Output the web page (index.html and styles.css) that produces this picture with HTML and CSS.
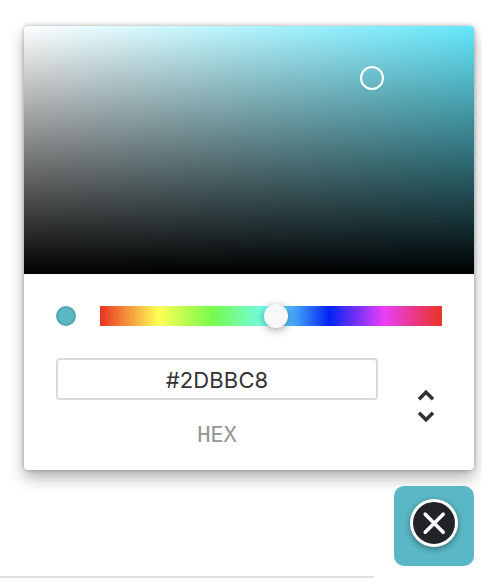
FILE: index.html
```html
<!DOCTYPE html>
<html lang="en">
<head>
<meta charset="utf-8">
<title>Color picker</title>
<link rel="stylesheet" href="styles.css">
</head>
<body>
<div class="picker">
  <div class="saturation"><span class="pointer"></span></div>
  <div class="body">
    <div class="controls">
      <span class="swatch"></span>
      <div class="hue"><span class="thumb"></span></div>
    </div>
    <div class="fields">
      <div class="field">
        <div class="value">#2DBBC8</div>
        <div class="label">HEX</div>
      </div>
      <svg class="toggle" width="20" height="36" viewBox="0 0 20 36">
        <path d="M3 11.3 10 4.3 17 11.3M3 24.7 10 31.7 17 24.7"/>
      </svg>
    </div>
  </div>
</div>
<div class="footer">
  <div class="rule"></div>
  <div class="trigger">
    <div class="close">
      <svg width="42" height="42" viewBox="0 0 42 42"><path d="M12.2 12.2 30.2 30.2M30.2 12.2 12.2 30.2"/></svg>
    </div>
  </div>
</div>
</body>
</html>
```
FILE: styles.css
```css
* { box-sizing: border-box; }
body {
  margin: 0;
  padding: 26px 8px 0 0;
  height: 580px;
  overflow: hidden;
  background: #fff;
  font-family: Inter, "Liberation Sans", sans-serif;
}
.picker {
  width: 450px;
  height: 444px;
  margin-left: 24px;
  border-radius: 4px;
  background: #fff;
  box-shadow: 0 0 4px rgba(0, 0, 0, .3), 0 8px 16px rgba(0, 0, 0, .3);
}
.saturation {
  position: relative;
  height: 248px;
  border-radius: 4px 4px 0 0;
  background:
    linear-gradient(to top, #000, rgba(0, 0, 0, 0)),
    linear-gradient(to right, #fff, rgba(255, 255, 255, 0)),
    #64e8fc;
}
.pointer {
  position: absolute;
  left: 336px;
  top: 40px;
  width: 24px;
  height: 24px;
  border: 2px solid #fff;
  border-radius: 50%;
}
.body { padding: 32px 32px 0; }
.controls {
  display: flex;
  align-items: center;
  gap: 24px;
}
.swatch {
  width: 20px;
  height: 20px;
  border-radius: 50%;
  background: #5ab7c6;
  box-shadow: inset 0 0 0 2px rgba(0, 0, 0, .1);
}
.hue {
  position: relative;
  flex: 1;
  height: 20px;
  background: linear-gradient(to right, #ea3323 0%, #ffff54 17%, #75fb4c 33%, #75fbfd 50%, #0023f5 67%, #ea3ff7 83%, #ea3323 100%);
}
.thumb {
  position: absolute;
  left: 164px;
  top: -2px;
  width: 24px;
  height: 24px;
  border-radius: 50%;
  background: #f8f8f8;
  box-shadow: 0 2px 8px rgba(0, 0, 0, .37);
}
.fields {
  display: flex;
  padding-top: 32px;
}
.field {
  width: 322px;
  text-align: center;
}
.value {
  height: 42px;
  border: 2px solid #dadada;
  border-radius: 4px;
  color: #333;
  font-size: 22px;
  line-height: 40px;
  letter-spacing: .15px;
}
.label {
  margin-top: 23px;
  color: #969696;
  font: 22px/24px "DejaVu Sans Mono", monospace;
}
.toggle {
  margin: 30px 0 0 38px;
  fill: none;
  stroke: #333;
  stroke-width: 3.6;
}
.footer {
  display: flex;
  align-items: flex-start;
  gap: 20px;
  margin-top: 16px;
}
.rule {
  width: 374px;
  height: 2px;
  margin-top: 90px;
  background: #e0e0e0;
}
.trigger {
  display: flex;
  justify-content: center;
  width: 80px;
  height: 80px;
  padding-top: 13px;
  border-radius: 10px;
  background: #5ab7c6;
}
.close {
  width: 48px;
  height: 48px;
  border: 3px solid #fff;
  border-radius: 50%;
  background: #212329;
  box-shadow: 0 2px 6px rgba(0, 0, 0, .4);
}
.close svg {
  display: block;
  fill: none;
  stroke: #fff;
  stroke-width: 3.6;
  stroke-linecap: round;
}
```
